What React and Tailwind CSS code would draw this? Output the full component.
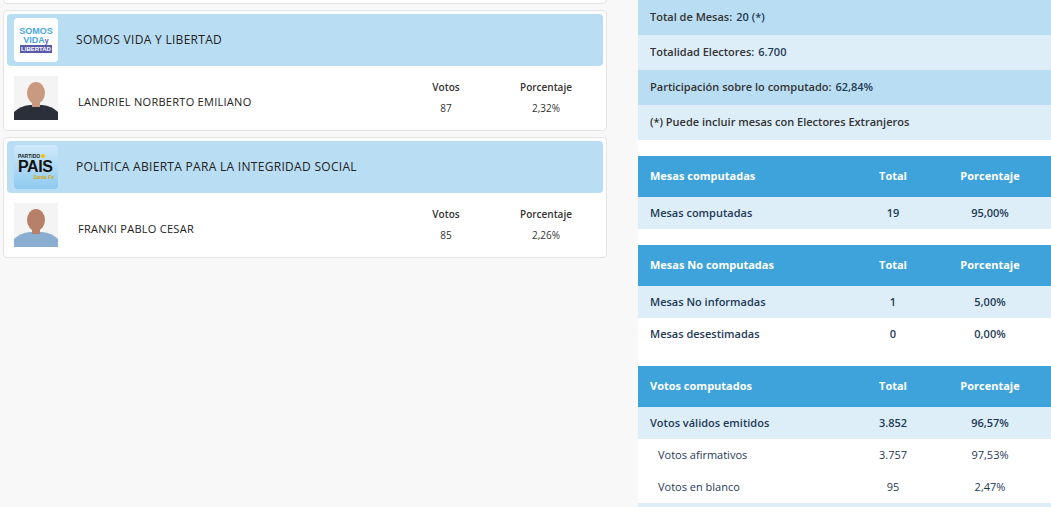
const font = { fontFamily: '"Open Sans", "Noto Sans", sans-serif' };

function Photo({ shirt, skin }) {
  return (
    <svg width="44" height="44" viewBox="0 0 44 44" className="shrink-0">
      <rect width="44" height="44" fill="#f4f4f4" />
      <path d="M0 44 L0 36 Q6 30 16 29 L28 29 Q38 30 44 36 L44 44 Z" fill={shirt} />
      <ellipse cx="22" cy="17" rx="9" ry="11" fill={skin} />
      <rect x="18" y="25" width="8" height="6" fill={skin} />
    </svg>
  );
}

function SomosLogo() {
  return (
    <div className="w-[44px] h-[44px] shrink-0 bg-white rounded flex flex-col items-center justify-center leading-[9px] font-black" style={{ fontFamily: '"Liberation Sans", sans-serif' }}>
      <span className="text-[9px] text-[#4aa8e0]">SOMOS</span>
      <span className="text-[9px] text-[#4aa8e0]">VIDA<span className="text-[#5a5aa8] text-[7px]">y</span></span>
      <span className="text-[6px] bg-[#5a5aa8] text-white px-[1px] leading-[8px]">LIBERTAD</span>
    </div>
  );
}

function PaisLogo() {
  return (
    <div className="w-[44px] h-[44px] shrink-0 rounded bg-gradient-to-b from-[#cfe9fa] to-[#8fcaf0] flex flex-col items-start justify-center pl-1 leading-none font-black" style={{ fontFamily: '"Liberation Sans", sans-serif' }}>
      <span className="text-[5px] text-[#222]">PARTIDO<span className="inline-block w-[4px] h-[4px] rounded-full bg-[#f2c200] ml-[1px]" /></span>
      <span className="text-[16px] text-[#111] tracking-tight">PAIS</span>
      <span className="text-[5px] text-[#d4a800] italic self-end pr-1">Santa Fe</span>
    </div>
  );
}

function PartyCard({ logo, party, name, votes, pct, photo }) {
  return (
    <div className="shrink-0 bg-white border border-[#e4e4e4] rounded mx-[3px] p-[3px] pb-[10px]">
      <div className="bg-[#b9ddf2] rounded h-[52px] flex items-center px-[7px] gap-[18px]">
        {logo}
        <span className="text-[12px] text-[#222] tracking-wide">{party}</span>
      </div>
      <div className="flex items-center px-[7px] mt-[10px]">
        {photo}
        <span className="text-[11px] text-[#222] tracking-wide ml-[20px] flex-1 mt-2">{name}</span>
        <div className="w-[60px] mr-[20px] text-center text-[10px] text-[#333]">
          <div className="font-semibold">Votos</div>
          <div className="mt-[6px]">{votes}</div>
        </div>
        <div className="w-[100px] text-center text-[10px] text-[#333]">
          <div className="font-semibold">Porcentaje</div>
          <div className="mt-[6px]">{pct}</div>
        </div>
      </div>
    </div>
  );
}

function Header({ title }) {
  return (
    <div className="h-[41px] shrink-0 bg-[#3fa3db] text-white font-bold flex items-center text-[11px] px-3">
      <span className="flex-1">{title}</span>
      <span className="w-[60px] text-center mr-[18px]">Total</span>
      <span className="w-[98px] text-center">Porcentaje</span>
    </div>
  );
}

function Row({ label, total, pct, bg, indent }) {
  return (
    <div className={`h-[32px] shrink-0 flex items-center text-[11px] text-[#1d3a55] px-3 ${bg} ${indent ? 'font-medium' : 'font-semibold'}`}>
      <span className={`flex-1 ${indent ? 'pl-2' : ''}`}>{label}</span>
      <span className="w-[60px] text-center mr-[18px]">{total}</span>
      <span className="w-[98px] text-center">{pct}</span>
    </div>
  );
}

export default function App() {
  return (
    <div className="w-[1051px] h-[507px] overflow-hidden bg-[#f8f8f8] flex items-start" style={font}>
      <div className="w-[610px] flex flex-col gap-[6px] -mt-[4px]">
        <div className="h-[8px] shrink-0 bg-white border border-[#e4e4e4] rounded mx-[3px]" />
        <PartyCard logo={<SomosLogo />} party="SOMOS VIDA Y LIBERTAD" name="LANDRIEL NORBERTO EMILIANO" votes="87" pct="2,32%" photo={<Photo shirt="#2b2f3a" skin="#c99a80" />} />
        <PartyCard logo={<PaisLogo />} party="POLITICA ABIERTA PARA LA INTEGRIDAD SOCIAL" name="FRANKI PABLO CESAR" votes="85" pct="2,26%" photo={<Photo shirt="#8aaed0" skin="#b78068" />} />
      </div>
      <div className="ml-[28px] flex-1 bg-white flex flex-col">
        {[
          ['Total de Mesas: ', '20 (*)', 'bg-[#b9ddf2]'],
          ['Totalidad Electores: ', '6.700', 'bg-[#ddeef9]'],
          ['Participación sobre lo computado: ', '62,84%', 'bg-[#b9ddf2]'],
          ['(*) Puede incluir mesas con Electores Extranjeros', '', 'bg-[#ddeef9]'],
        ].map(([a, b, bg]) => (
          <div key={a} className={`h-[35px] shrink-0 flex items-center px-3 text-[11px] font-semibold text-[#333] ${bg}`}>
            {a}<span className="text-[#1d3a55] ml-1">{b}</span>
          </div>
        ))}
        <div className="h-[16px] shrink-0" />
        <Header title="Mesas computadas" />
        <Row label="Mesas computadas" total="19" pct="95,00%" bg="bg-[#ddeef9]" />
        <div className="h-[16px] shrink-0" />
        <Header title="Mesas No computadas" />
        <Row label="Mesas No informadas" total="1" pct="5,00%" bg="bg-[#ddeef9]" />
        <Row label="Mesas desestimadas" total="0" pct="0,00%" bg="bg-white" />
        <div className="h-[16px] shrink-0" />
        <Header title="Votos computados" />
        <Row label="Votos válidos emitidos" total="3.852" pct="96,57%" bg="bg-[#ddeef9]" />
        <Row label="Votos afirmativos" total="3.757" pct="97,53%" bg="bg-white" indent />
        <Row label="Votos en blanco" total="95" pct="2,47%" bg="bg-white" indent />
        <Row label="" total="" pct="" bg="bg-[#ddeef9]" />
      </div>
    </div>
  );
}
